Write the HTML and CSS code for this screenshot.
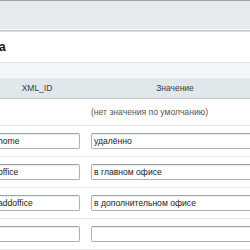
FILE: index.html
```html
<!DOCTYPE html>
<html>
<head>
<meta charset="utf-8">
<link rel="stylesheet" href="styles.css">
</head>
<body>
<div class="page">
  <div class="topbar"></div>
  <div class="title">а</div>
  <div class="subbar"></div>
  <div class="grid">
    <div class="hcell">XML_ID</div>
    <div class="hcell">Значение</div>
    <div class="cell default-left"></div>
    <div class="cell default">(нет значения по умолчанию)</div>
    <div class="cell"><div class="input input-left">home</div></div>
    <div class="cell"><div class="input input-right">удалённо</div></div>
    <div class="cell"><div class="input input-left">office</div></div>
    <div class="cell"><div class="input input-right">в главном офисе</div></div>
    <div class="cell"><div class="input input-left">addoffice</div></div>
    <div class="cell"><div class="input input-right">в дополнительном офисе</div></div>
    <div class="cell"><div class="input input-left"></div></div>
    <div class="cell"><div class="input input-right"></div></div>
  </div>
</div>
</body>
</html>
```

FILE: styles.css
```css
html, body {
  margin: 0;
  padding: 0;
  background: #fff;
}
.page {
  width: 250px;
  height: 250px;
  overflow: hidden;
  font-family: "Liberation Sans", Arial, sans-serif;
  color: #333;
}
.topbar {
  height: 28px;
  background: #e5eaed;
  border-top: 1px solid #9ea3a6;
  border-bottom: 1px solid #f4f6f7;
  box-shadow: 0 1px 0 #c3c8ca, 0 2px 0 #d6dadc;
  margin-bottom: 2px;
}
.title {
  height: 30px;
  line-height: 30px;
  font-size: 12px;
  font-weight: bold;
  color: #111;
  text-indent: -1px;
  border-bottom: 1px solid #dde1e3;
}
.subbar {
  height: 14px;
  background: #f3f6f7;
  border-bottom: 1px solid #fbfcfc;
}
.grid {
  display: grid;
  grid-template-columns: 96px 180px;
  margin-left: -11px;
  width: 276px;
}
.hcell {
  height: 20px;
  line-height: 20px;
  background: #e1e8eb;
  border-bottom: 1px solid #bcc4c8;
  text-align: center;
  font-size: 8.5px;
  color: #3c3c3c;
}
.cell {
  height: 23px;
  padding: 7px 6px 0;
  border-bottom: 1px solid #e4e8e9;
}
.default-left, .default {
  height: 26px;
  padding: 0 6px;
}
.default {
  line-height: 27px;
  font-size: 8.6px;
  color: #555;
}
.input {
  box-sizing: border-box;
  height: 16px;
  line-height: 14px;
  border: 1px solid #adb2b5;
  border-top-color: #9ea3a6;
  border-radius: 2px;
  box-shadow: inset 0 1px 1px rgba(0, 0, 0, 0.08);
  background: #fff;
  font-size: 8.6px;
  color: #222;
  padding: 0 2px;
  white-space: nowrap;
  overflow: hidden;
}
.input-left {
  width: 85px;
}
.input-right {
  width: 168px;
}
```
